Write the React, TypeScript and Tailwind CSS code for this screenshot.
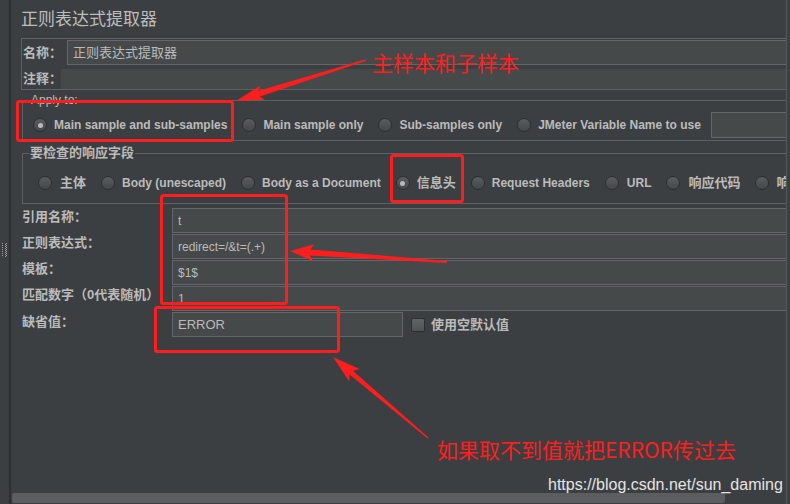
import React from 'react';

const RED = '#ff1d1d';

// arrow drawn as one tapered polygon: thin tail -> wider shaft -> barbed head
const arrowPoints = (x1: number, y1: number, x2: number, y2: number, w0: number, w1: number, hw: number, hl: number) => {
  const dx = x2 - x1;
  const dy = y2 - y1;
  const len = Math.hypot(dx, dy);
  const ux = dx / len;
  const uy = dy / len;
  const nx = -uy;
  const ny = ux;
  const bx = x2 - ux * hl;
  const by = y2 - uy * hl;
  const cx = bx - ux * 4;
  const cy = by - uy * 4;
  const pts = [
    [x1 + (nx * w0) / 2, y1 + (ny * w0) / 2],
    [bx + (nx * w1) / 2, by + (ny * w1) / 2],
    [cx + (nx * hw) / 2, cy + (ny * hw) / 2],
    [x2, y2],
    [cx - (nx * hw) / 2, cy - (ny * hw) / 2],
    [bx - (nx * w1) / 2, by - (ny * w1) / 2],
    [x1 - (nx * w0) / 2, y1 - (ny * w0) / 2],
  ];
  return pts.map((p) => p.map((v) => v.toFixed(1)).join(',')).join(' ');
};

const Radio = ({ checked }: { checked?: boolean }) => (
  <span className="flex h-[14px] w-[14px] shrink-0 items-center justify-center rounded-full border border-[#2c2e30] bg-linear-to-b from-[#5a5d5f] to-[#45484a]">
    {checked && <span className="h-[5px] w-[5px] rounded-full bg-[#b8babc]" />}
  </span>
);

const Option = ({ label, checked, cjk, gap }: { label: string; checked?: boolean; cjk?: boolean; gap: string }) => (
  <div className={`flex shrink-0 items-center ${gap}`}>
    <Radio checked={checked} />
    <span className={cjk ? 'whitespace-nowrap text-[13px] leading-[16px] font-bold' : 'whitespace-nowrap text-[12px] leading-[14px] font-bold'}>{label}</span>
  </div>
);

const Field = ({ value, className }: { value?: string; className?: string }) => (
  <div className={`flex h-[25px] items-center border border-[#646667] bg-[#45494a] pl-[5px] text-[12px] text-[#bbbbbb] ${className ?? ''}`}>
    {value}
  </div>
);

const rows = [
  { label: '引用名称：', value: 't' },
  { label: '正则表达式：', value: 'redirect=/&t=(.+)' },
  { label: '模板：', value: '$1$' },
  { label: '匹配数字（0代表随机）', value: '1' },
];

const App: React.FC = () => {
  return (
    <div className="relative flex h-[504px] w-[790px] overflow-hidden bg-[#3c3f41] font-['Liberation_Sans','Noto_Sans_CJK_SC',sans-serif] text-[#bbbbbb]">
      {/* splitter strip */}
      <div className="flex w-[9px] shrink-0 items-center justify-center">
        <svg width="5" height="14" viewBox="0 0 5 14" className="mb-[4px]">
          {Array.from({ length: 14 }).map((_, r) =>
            [0, 2, 4].map((c) => ((r + c / 2) % 2 === 0 ? <rect key={`${r}-${c}`} x={c + (r % 2)} y={r} width="1" height="1" fill="#9a9c9e" /> : null))
          )}
        </svg>
      </div>
      <div className="w-[2px] shrink-0 bg-[#2d2f31]" />

      {/* main panel */}
      <div className="flex w-[776px] shrink-0 flex-col overflow-hidden border-r border-[#56595b] pb-[1px]">
        <div className="h-[38px] pl-[10px] pt-[9px] text-[17px] leading-[22px] text-[#bdbdbd]">正则表达式提取器</div>

        {/* name / comment box */}
        <div className="ml-[10px] mr-[-6px] border border-[#5e6163]">
          <div className="mt-[1px] flex h-[25px] items-stretch">
            <div className="flex w-[45px] shrink-0 items-center whitespace-nowrap pl-[1px] text-[13px] font-bold">名称：</div>
            <div className="flex flex-1 items-center border border-[#646667] bg-[#45494a] pl-[5px] text-[13px]">正则表达式提取器</div>
          </div>
          <div className="mt-[4px] flex h-[20px] items-stretch">
            <div className="flex w-[39px] shrink-0 items-center whitespace-nowrap pl-[1px] text-[13px] font-bold">注释：</div>
            <div className="flex-1 bg-[#45494a]" />
          </div>
        </div>

        {/* apply to */}
        <fieldset className="ml-[11px] mr-[-6px] mt-[3px] border border-[#5e6163]">
          <legend className="ml-[7px] px-[1px] text-[12px] leading-[14px]">Apply to:</legend>
          <div className="mb-[2px] mt-[5px] flex h-[26px] items-center gap-[15px] pl-[10px]">
            <Option label="Main sample and sub-samples" checked gap="gap-[7px]" />
            <Option label="Main sample only" gap="gap-[7px]" />
            <Option label="Sub-samples only" gap="gap-[7px]" />
            <Option label="JMeter Variable Name to use" gap="gap-[7px]" />
            <div className="ml-[-5px] h-[26px] flex-1 border border-[#646667] bg-[#45494a]" />
          </div>
        </fieldset>

        {/* field to check */}
        <fieldset className="ml-[11px] mr-[-6px] mt-[4px] border border-[#5e6163]">
          <legend className="ml-[6px] px-[1px] text-[13px] leading-[16px] font-bold">要检查的响应字段</legend>
          <div className="mb-[10px] mt-[12px] flex h-[20px] items-center gap-[15px] pl-[15px]">
            <Option label="主体" cjk gap="gap-[8px]" />
            <Option label="Body (unescaped)" gap="gap-[7px]" />
            <Option label="Body as a Document" gap="gap-[7px]" />
            <Option label="信息头" cjk checked gap="gap-[7px]" />
            <Option label="Request Headers" gap="gap-[7px]" />
            <Option label="URL" gap="gap-[8px]" />
            <Option label="响应代码" cjk gap="gap-[8px]" />
            <Option label="响应信息" cjk gap="gap-[7px]" />
          </div>
        </fieldset>

        {/* regex settings */}
        <div className="mt-[4px] flex flex-col gap-[1px] pl-[11px]">
          {rows.map((r) => (
            <div key={r.label} className="flex h-[25px]">
              <div className="w-[150px] shrink-0 whitespace-nowrap pt-[1px] text-[13px] leading-[15px] font-bold">{r.label}</div>
              <Field value={r.value} className="mr-[-6px] flex-1" />
            </div>
          ))}
          <div className="flex h-[25px]">
            <div className="w-[150px] shrink-0 pt-[2px] text-[13px] leading-[15px] font-bold">缺省值：</div>
            <Field value="ERROR" className="w-[231px] text-[13px]" />
            <div className="ml-[8px] flex items-center gap-[6px]">
              <span className="h-[14px] w-[14px] rounded-[2px] border border-[#2c2e30] bg-linear-to-b from-[#626567] to-[#505355]" />
              <span className="text-[13px] leading-[16px] font-bold">使用空默认值</span>
            </div>
          </div>
        </div>

        {/* horizontal scrollbar */}
        <div className="ml-[1px] mt-auto h-[10px] w-[713px] rounded-[2px] bg-[#5b5d5f]" />
      </div>
      <div className="flex-1 bg-[#3c3f41]" />

      {/* red annotations drawn over the screenshot */}
      <svg className="pointer-events-none absolute left-0 top-0" width="790" height="504" viewBox="0 0 790 504">
        <g fill="none" stroke={RED} strokeWidth="3">
          <rect x="17.5" y="101.5" width="215" height="39" rx="2" />
          <rect x="391.5" y="155.5" width="71" height="46" rx="2" />
          <rect x="161.5" y="195.5" width="125" height="108" rx="2" />
          <rect x="155.5" y="307.5" width="183" height="44" rx="2" />
        </g>
        <g fill={RED}>
          <polygon points={arrowPoints(366, 60, 236, 101, 1.5, 6, 15, 24)} />
          <polygon points={arrowPoints(447, 262, 290, 251, 2, 6, 17, 20)} />
          <polygon points={arrowPoints(428, 438, 333, 357, 1.5, 5, 16, 24)} />
        </g>
      </svg>
      <div className="absolute left-[372px] top-[49px] font-['Noto_Sans_CJK_SC',sans-serif] text-[21px] leading-[26px] text-[#ff1d1d]">主样本和子样本</div>
      <div className="absolute left-[437px] top-[436px] font-['Noto_Sans_CJK_SC',sans-serif] text-[21px] leading-[26px] text-[#ff1d1d]">如果取不到值就把ERROR传过去</div>
      <div className="absolute left-[548px] top-[475px] font-['Liberation_Sans',sans-serif] text-[16px] leading-[19px] text-[#e4e4e4]">https://blog.csdn.net/sun_daming</div>
    </div>
  );
};

export default App;
